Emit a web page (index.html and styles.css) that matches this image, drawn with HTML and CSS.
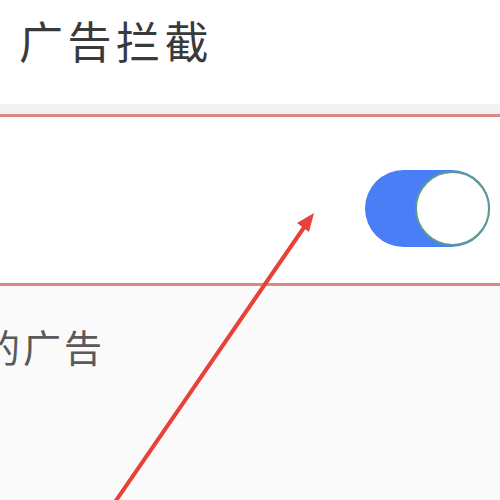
FILE: index.html
```html
<!DOCTYPE html>
<html lang="zh-CN">
<head>
  <meta charset="UTF-8" />
  <meta name="viewport" content="width=device-width, initial-scale=1.0"/>
  <title>广告拦截</title>
  <link rel="stylesheet" href="styles.css">
</head>
<body>
  <header class="top-bar">
    <h1 class="title">广告拦截</h1>
  </header>
  <div class="band"></div>

  <section class="setting-row">
    <div class="toggle on">
      <div class="knob"></div>
    </div>
  </section>

  <section class="desc">
    <p class="desc-text">拦截网页中的广告</p>
  </section>

  <!-- annotation arrow drawn over the screenshot -->
  <svg class="arrow" width="500" height="500" viewBox="0 0 500 500">
    <line x1="115" y1="502" x2="305" y2="226" stroke="#e8413a" stroke-width="4" stroke-linecap="round"/>
    <polygon points="314,213 297,223 309,232" fill="#e8413a"/>
  </svg>
</body>
</html>
```

FILE: styles.css
```css
* {
  margin: 0;
  padding: 0;
  box-sizing: border-box;
  font-family: "Noto Sans CJK SC", "Noto Sans", sans-serif;
}

html, body {
  width: 500px;
  height: 500px;
  overflow: hidden;
}

body {
  background: #fafafa;
  position: relative;
}

.top-bar {
  height: 104px;
  background: #fff;
  padding: 18px 0 0 19px;
}

.title {
  font-size: 44px;
  line-height: 44px;
  font-weight: normal;
  letter-spacing: 4.5px;
  color: #3a3a3a;
}

.band {
  height: 10px;
  background: #f1f2f4;
}

.setting-row {
  height: 172px;
  background: #fff;
  border-top: 3px solid #d98a88;
  border-bottom: 3px solid #d98a88;
  display: flex;
  justify-content: flex-end;
  align-items: flex-start;
  padding: 53px 10px 0 0;
}

.toggle {
  width: 125px;
  height: 77px;
  border-radius: 39px;
  background: #4a7ef6;
  display: flex;
  justify-content: flex-end;
  align-items: center;
}

.knob {
  width: 75px;
  height: 75px;
  border-radius: 50%;
  background: #fff;
  border: 2px solid #5c9c90;
}

.desc {
  overflow: hidden;
  padding-top: 38px;
}

.desc-text {
  font-size: 38px;
  line-height: 44px;
  letter-spacing: 3px;
  color: #595959;
  white-space: nowrap;
  margin-left: -223px;
}

.arrow {
  position: absolute;
  left: 0;
  top: 0;
}
```
